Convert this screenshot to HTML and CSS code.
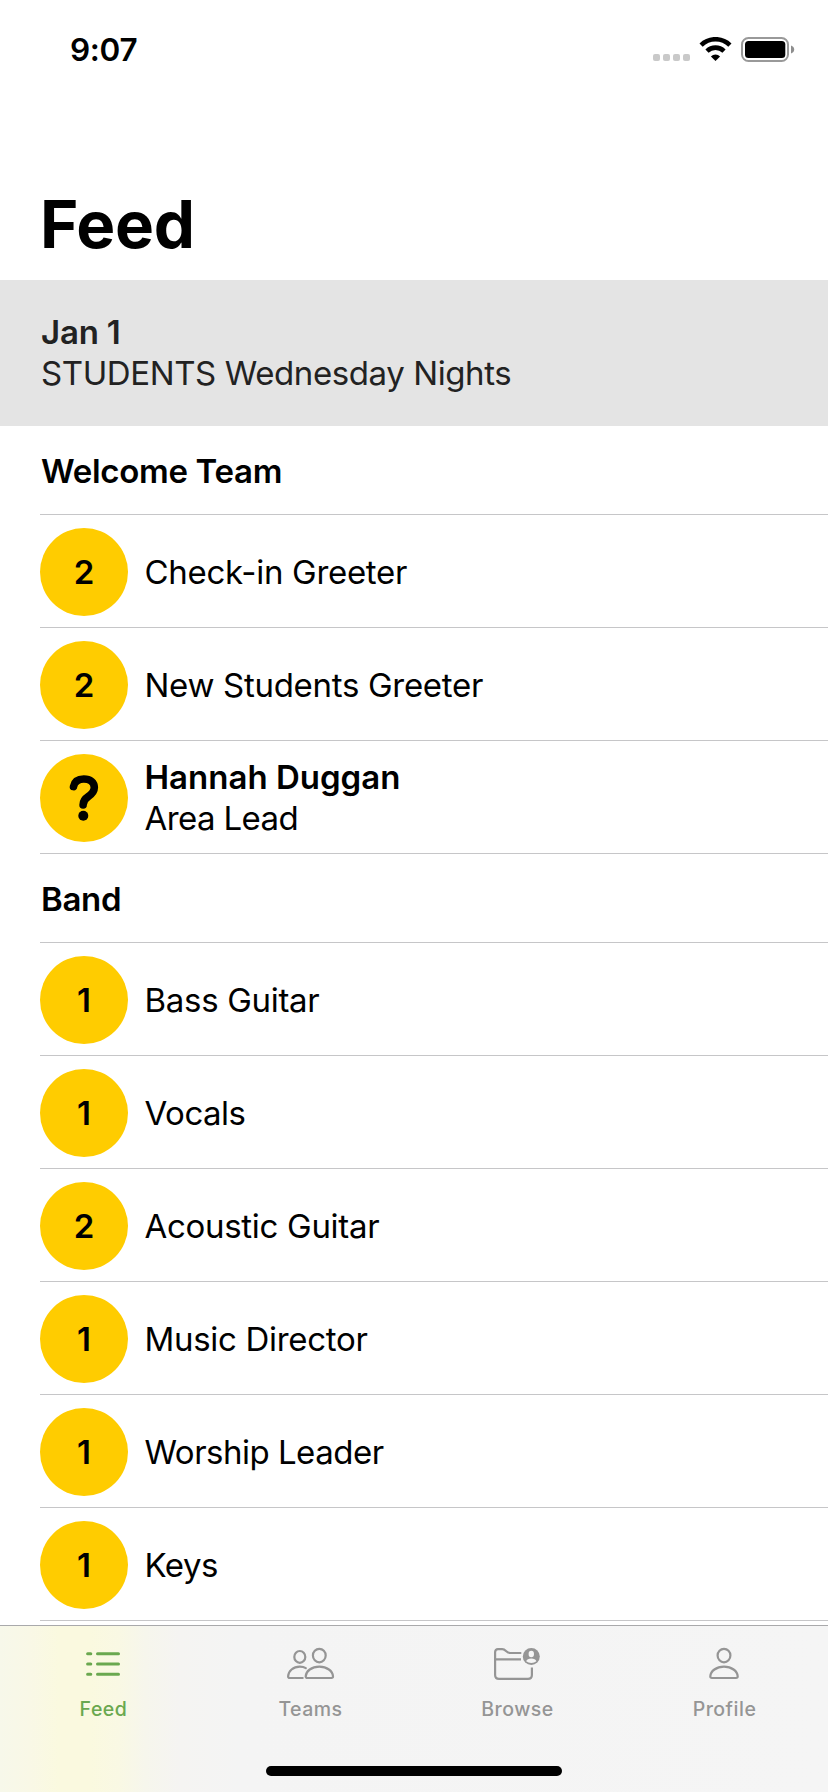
FILE: index.html
```html
<!DOCTYPE html>
<html lang="en">
<head>
<meta charset="utf-8">
<title>Feed</title>
<link rel="stylesheet" href="styles.css">
</head>
<body>
<div class="screen">
  <header class="status">
    <span class="clock">9:07</span>
    <svg class="status-icons" width="142" height="26" viewBox="0 0 142 26">
      <g fill="#c9c9c9">
        <rect x="0" y="17" width="7" height="7" rx="2"/>
        <rect x="10" y="17" width="7" height="7" rx="2"/>
        <rect x="20" y="17" width="7" height="7" rx="2"/>
        <rect x="30" y="17" width="7" height="7" rx="2"/>
      </g>
      <g fill="none" stroke="#000" stroke-width="4.6">
        <path d="M48.1 8.1a20.6 20.6 0 0 1 28.8 0"/>
        <path d="M54 14.1a12.2 12.2 0 0 1 17 0"/>
      </g>
      <path d="M62.5 24l-4.6-4.6a6.6 6.6 0 0 1 9.2 0z"/>
      <rect x="89" y="1" width="46" height="23" rx="6.5" fill="none" stroke="#999" stroke-width="2"/>
      <rect x="92" y="4" width="40.3" height="17" rx="3.5"/>
      <path d="M138 8.5q3.2 1.2 3.2 4t-3.2 4z" fill="#8e8e8e"/>
    </svg>
  </header>
  <h1 class="title">Feed</h1>
  <section class="event">
    <div class="event-date">Jan 1</div>
    <div class="event-name">STUDENTS Wednesday Nights</div>
  </section>
  <main class="list">
    <h2 class="group">Welcome Team</h2>
    <div class="row"><span class="badge">2</span><span class="role">Check-in Greeter</span></div>
    <div class="row"><span class="badge">2</span><span class="role">New Students Greeter</span></div>
    <div class="row">
      <span class="badge">
        <svg width="40" height="52" viewBox="0 0 40 52">
          <path d="M9.500 14.600C10.500 9.300 14.200 7 19.800 7c6.600 0 10.500 3.400 10.500 8.600 0 4.400-2.600 6.800-6.300 9.200-3.400 2.200-4.900 4.200-4.900 8.100" fill="none" stroke="#000" stroke-width="7.600" stroke-linecap="round" stroke-linejoin="round"/>
          <circle cx="19.300" cy="43.700" r="5"/>
        </svg>
      </span>
      <span class="role person"><b>Hannah Duggan</b><span>Area Lead</span></span>
    </div>
    <h2 class="group">Band</h2>
    <div class="row"><span class="badge">1</span><span class="role">Bass Guitar</span></div>
    <div class="row"><span class="badge">1</span><span class="role tight">Vocals</span></div>
    <div class="row"><span class="badge">2</span><span class="role">Acoustic Guitar</span></div>
    <div class="row"><span class="badge">1</span><span class="role">Music Director</span></div>
    <div class="row"><span class="badge">1</span><span class="role tight">Worship Leader</span></div>
    <div class="row"><span class="badge">1</span><span class="role tight">Keys</span></div>
  </main>
  <nav class="tabs">
    <a class="tab active">
      <svg class="tab-icon" width="61" height="40" viewBox="0 0 61 40">
        <path d="M14.600 9.700h3.200M14.600 20h3.200M14.600 30.300h3.200M24.500 9.700h21M24.500 20h21M24.500 30.300h21" stroke-width="3"/>
      </svg>
      <span>Feed</span>
    </a>
    <a class="tab">
      <svg class="tab-icon" width="61" height="40" viewBox="0 0 61 40">
        <ellipse cx="19.800" cy="12.900" rx="5.500" ry="5.900"/>
        <ellipse cx="39.300" cy="11.600" rx="6.400" ry="6.700"/>
        <path d="M25.800 24.200C24 23 22 22.700 19.800 22.700c-6.600 0-11.400 4.300-11.700 9.600 0 1.200.5 1.700 1.600 1.700h13"/>
        <path d="M27.300 34h24.100q1.700 0 1.600-1.700c-.3-5.300-6-9.600-13.700-9.600s-13.300 4.300-13.600 9.600q0 1.700 1.600 1.700z"/>
      </svg>
      <span>Teams</span>
    </a>
    <a class="tab browse">
      <svg class="tab-icon" width="61" height="40" viewBox="0 0 61 40">
        <path d="M34.300 9H23.500c-2 0-3-.6-4.200-1.700C17.800 5.900 17 5.200 15.300 5.200H11C9 5.200 8.100 6.300 8.100 8.200V31c0 2.700 1.200 3.900 3.900 3.900h29c2.700 0 3.900-1.200 3.900-3.900v-7.500M8.500 15.300h25.500"/>
        <circle cx="44.300" cy="12.600" r="8.500" fill="currentColor" stroke="none"/>
        <ellipse cx="44.300" cy="10" rx="2.700" ry="3.200" fill="#f5f5f5" stroke="none"/>
        <path d="M39.200 17.200q1-2.600 5.100-2.600t5.100 2.600q-2.100 1.700-5.100 1.700t-5.100-1.700z" fill="#f5f5f5" stroke="none"/>
      </svg>
      <span>Browse</span>
    </a>
    <a class="tab">
      <svg class="tab-icon" width="61" height="40" viewBox="0 0 61 40">
        <ellipse cx="30" cy="11.600" rx="6.400" ry="6.700"/>
        <path d="M18 34h24q1.800 0 1.700-1.700c-.3-5.300-6-9.600-13.700-9.600s-13.400 4.300-13.700 9.600q-.1 1.700 1.700 1.700z"/>
      </svg>
      <span>Profile</span>
    </a>
    <div class="home"></div>
  </nav>
</div>
</body>
</html>
```
FILE: styles.css
```css
* { box-sizing: border-box; }
body { margin: 0; background: #fff; }
.screen {
  display: flex;
  flex-direction: column;
  width: 828px;
  height: 1792px;
  overflow: hidden;
  background: #fff;
  color: #000;
  font-family: Inter, "Liberation Sans", sans-serif;
  font-size: 33px;
  line-height: 41px;
}
.status {
  flex: none;
  display: flex;
  justify-content: space-between;
  height: 180px;
  padding: 29px 33px 0 70px;
}
.clock { font-size: 31.5px; font-weight: 600; letter-spacing: -0.3px; }
.status-icons { margin-top: 8px; }
.title {
  flex: none;
  height: 100px;
  margin: 0;
  padding: 5px 0 0 40px;
  font-size: 65.5px;
  font-weight: 700;
  line-height: 80px;
  letter-spacing: -0.3px;
}
.event {
  flex: none;
  height: 146px;
  padding: 32px 40px 0 41px;
  background: #e4e4e4;
  color: #222;
}
.event-date { font-weight: 600; letter-spacing: -0.2px; }
.event-name { letter-spacing: -0.4px; }
.list { flex: none; height: 1199px; overflow: hidden; padding-left: 40px; }
.group {
  height: 89px;
  margin: 0;
  padding: 25px 0 0 1px;
  border-bottom: 1px solid #c6c6c8;
  font-size: 33px;
  font-weight: 600;
  letter-spacing: -0.3px;
}
.row {
  display: flex;
  align-items: center;
  height: 113px;
  padding-top: 2px;
  border-bottom: 1px solid #c6c6c8;
}
.badge {
  display: flex;
  flex: none;
  align-items: center;
  justify-content: center;
  width: 88px;
  height: 88px;
  margin-right: 16.5px;
  border-radius: 50%;
  background: #fc0;
  font-weight: 600;
}
.role { letter-spacing: -0.3px; }
.tight { letter-spacing: -0.5px; }
.person { display: flex; flex-direction: column; letter-spacing: -0.6px; }
.person b { font-weight: 600; letter-spacing: 0; }
.tabs {
  flex: none;
  display: grid;
  grid-template-columns: repeat(4, 207px);
  grid-template-rows: 140px 10px;
  height: 167px;
  border-top: 1px solid #a9a9ab;
  background: linear-gradient(90deg, #f7f8ea 0, #f9f8e6 30px, #faf9df 60px, #faf9df 90px, #f9f8e4 120px, #f6f6ec 145px, #f5f4f2 180px, #f4f4f4 240px, #f5f5f5 828px);
}
.tab {
  display: flex;
  flex-direction: column;
  align-items: center;
  padding-top: 18px;
  color: #959595;
  font-size: 19.5px;
  font-weight: 500;
  line-height: 24px;
  letter-spacing: 0.5px;
}
.tab span { margin-top: 13px; }
.tab.active { color: #6aa84f; }
.tab-icon { fill: none; stroke: currentColor; stroke-width: 2.2; stroke-linecap: round; }
.browse .tab-icon { stroke-linecap: butt; }
.home {
  grid-column: 1 / -1;
  justify-self: center;
  width: 296px;
  height: 10px;
  border-radius: 5px;
  background: #000;
}
```
